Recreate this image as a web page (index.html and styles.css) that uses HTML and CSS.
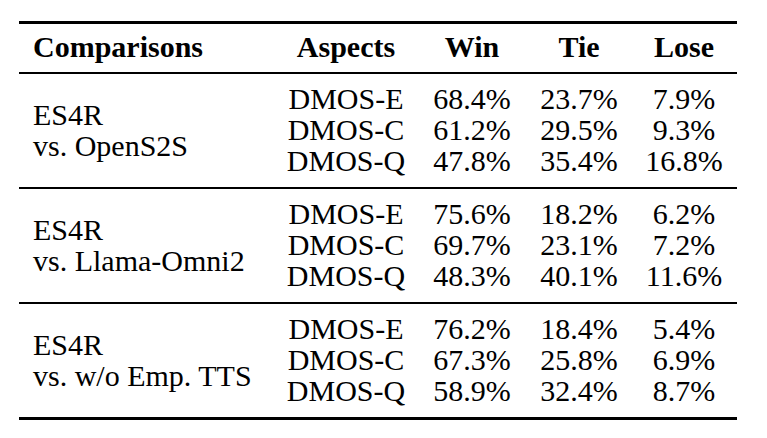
FILE: index.html
```html
<!DOCTYPE html>
<html>
<head>
<meta charset="utf-8">
<link rel="stylesheet" href="styles.css">
</head>
<body>
<table class="results">
  <colgroup>
    <col class="c-comp">
    <col class="c-asp">
    <col class="c-win">
    <col class="c-tie">
    <col class="c-lose">
  </colgroup>
  <thead>
    <tr>
      <th class="left">Comparisons</th>
      <th>Aspects</th>
      <th>Win</th>
      <th>Tie</th>
      <th>Lose</th>
    </tr>
  </thead>
  <tbody>
    <tr>
      <td class="left">ES4R<br>vs. OpenS2S</td>
      <td>DMOS-E<br>DMOS-C<br>DMOS-Q</td>
      <td>68.4%<br>61.2%<br>47.8%</td>
      <td>23.7%<br>29.5%<br>35.4%</td>
      <td>7.9%<br>9.3%<br>16.8%</td>
    </tr>
    <tr>
      <td class="left">ES4R<br>vs. Llama-Omni2</td>
      <td>DMOS-E<br>DMOS-C<br>DMOS-Q</td>
      <td>75.6%<br>69.7%<br>48.3%</td>
      <td>18.2%<br>23.1%<br>40.1%</td>
      <td>6.2%<br>7.2%<br>11.6%</td>
    </tr>
    <tr class="last">
      <td class="left">ES4R<br>vs. w/o Emp. TTS</td>
      <td>DMOS-E<br>DMOS-C<br>DMOS-Q</td>
      <td>76.2%<br>67.3%<br>58.9%</td>
      <td>18.4%<br>25.8%<br>32.4%</td>
      <td>5.4%<br>6.9%<br>8.7%</td>
    </tr>
  </tbody>
</table>
</body>
</html>
```
FILE: styles.css
```css
html, body {
  margin: 0;
  padding: 0;
  background: #ffffff;
}

body {
  padding: 21px 0 0 19px;
  font-family: "Liberation Serif", "Times New Roman", Tinos, Times, "DejaVu Serif", serif;
  color: #000000;
}

.results {
  width: 718px;
  table-layout: fixed;
  border-collapse: separate;
  border-spacing: 0;
  font-family: "Liberation Serif", "Times New Roman", Tinos, Times, "DejaVu Serif", serif;
  font-size: 30px;
  line-height: 31px;
}

.results th,
.results td {
  font-family: "Liberation Serif", "Times New Roman", Tinos, Times, "DejaVu Serif", serif;
}

.c-comp { width: 256px; }
.c-asp { width: 142px; }
.c-win { width: 110px; }
.c-tie { width: 104px; }
.c-lose { width: 106px; }

.results th {
  font-weight: bold;
  text-align: center;
  padding: 7px 0 10px 0;
  border-top: 3px solid #000;
  border-bottom: 2px solid #000;
  white-space: nowrap;
}

.results td {
  text-align: center;
  vertical-align: middle;
  padding: 9px 0 11px 0;
  border-bottom: 2px solid #000;
  white-space: nowrap;
}

.results .last td {
  border-bottom-width: 3px;
}

.results .left {
  text-align: left;
  padding-left: 14px;
}
```
